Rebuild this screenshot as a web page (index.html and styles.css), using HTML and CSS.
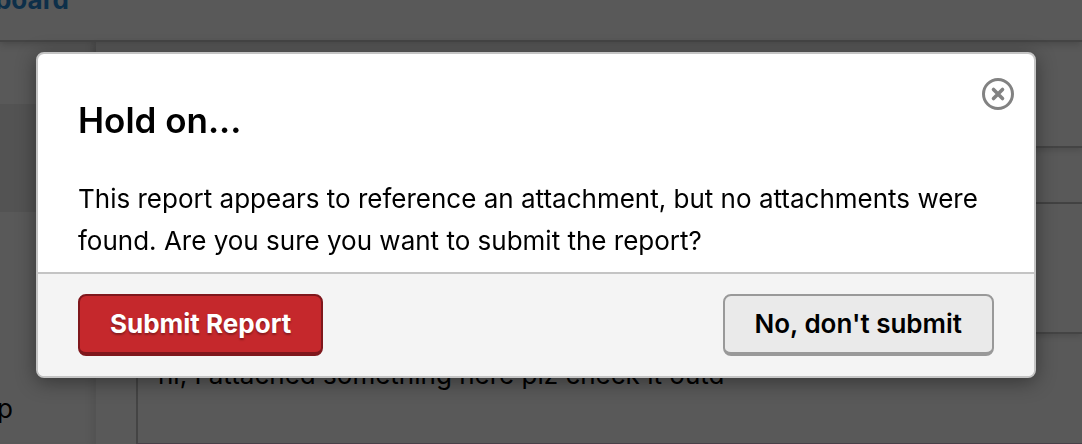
FILE: index.html
```html
<!DOCTYPE html>
<html lang="en">
<head>
<meta charset="utf-8">
<title>Submit Report</title>
<link rel="stylesheet" href="styles.css">
</head>
<body>
<div class="page">
  <header class="topbar"><a class="topbar-link" href="#">board</a></header>
  <div class="columns">
    <nav class="sidebar">
      <div class="sidebar-current"></div>
      <div class="sidebar-item">p</div>
    </nav>
    <main class="content">
      <div class="strip strip-tall"></div>
      <div class="strip strip-short"></div>
      <div class="strip strip-form"></div>
      <div class="editor"><p class="editor-text">hi, I attached something here plz check it outd</p></div>
    </main>
  </div>
</div>
<div class="overlay">
  <section class="dialog" role="dialog" aria-modal="true" aria-labelledby="dialog-title">
    <div class="dialog-body">
      <h1 class="dialog-title" id="dialog-title">Hold on...</h1>
      <p class="dialog-text">This report appears to reference an attachment, but no attachments were found. Are you sure you want to submit the report?</p>
      <button class="close" type="button" aria-label="Close">
        <svg class="close-icon" viewBox="0 0 32 32" fill="none" stroke="currentColor" aria-hidden="true">
          <circle cx="16" cy="16" r="14.5" stroke-width="3"/>
          <path d="M11.5 11.5l9 9M20.5 11.5l-9 9" stroke-width="3.6" stroke-linecap="round"/>
        </svg>
      </button>
    </div>
    <footer class="dialog-footer">
      <button class="button button-danger" type="button">Submit Report</button>
      <button class="button" type="button">No, don't submit</button>
    </footer>
  </section>
</div>
</body>
</html>
```
FILE: styles.css
```css
* { box-sizing: border-box; }

body {
  margin: 0;
  height: 100vh;
  overflow: hidden;
  background: #595959;
  color: #000;
  font-family: Inter, "Liberation Sans", sans-serif;
  font-size: 26px;
  line-height: 42px;
}

.page {
  display: flex;
  flex-direction: column;
  height: 100vh;
  overflow: hidden;
}

.topbar {
  display: flex;
  flex-shrink: 0;
  height: 42px;
  border-bottom: 2px solid #444;
  box-shadow: 0 2px 8px rgba(0, 0, 0, 0.2);
  z-index: 1;
}

.topbar-link {
  display: flex;
  justify-content: flex-end;
  width: 69px;
  line-height: 0;
  color: #0d2f49;
  font-weight: 700;
  text-decoration: none;
}

.columns { display: flex; flex: 1; }

.sidebar {
  width: 96px;
  padding-top: 62px;
  border-right: 1px solid #535353;
  box-shadow: inset -8px 0 8px -6px rgba(0, 0, 0, 0.1);
}

.sidebar-current { height: 108px; background: #535353; }

.sidebar-item {
  display: flex;
  justify-content: flex-end;
  width: 13px;
  padding-top: 176px;
}

.content { flex: 1; }

.strip { border-bottom: 2px solid #444; }
.strip-tall { height: 106px; box-shadow: 0 2px 6px rgba(0, 0, 0, 0.15); }
.strip-short { height: 56px; }
.strip-form { height: 130px; box-shadow: 0 2px 6px rgba(0, 0, 0, 0.15); }

.editor {
  height: 110px;
  margin-left: 40px;
  padding: 20px;
  border-left: 2px solid #444;
  border-bottom: 1px solid #484048;
}

.editor-text { margin: 0; }

.overlay {
  position: fixed;
  inset: 0;
  z-index: 2;
  padding: 52px 46px 0 36px;
}

.dialog {
  overflow: hidden;
  border: 2px solid #c4c4c4;
  border-radius: 8px;
  background: #fff;
  box-shadow: 0 4px 20px rgba(0, 0, 0, 0.4);
}

.dialog-body {
  position: relative;
  padding: 45px 40px 10px;
}

.dialog-title {
  margin: 0 0 37px;
  font-size: 35px;
  font-weight: 600;
  line-height: 42px;
}

.dialog-text { margin: 0; }

.close {
  position: absolute;
  top: 24px;
  right: 20px;
  padding: 0;
  border: 0;
  background: none;
  color: #828282;
  line-height: 0;
}

.close-icon { width: 32px; height: 32px; }

.dialog-footer {
  display: flex;
  justify-content: space-between;
  padding: 20px 40px;
  border-top: 2px solid #c4c4c4;
  background: #f4f4f4;
}

.button {
  padding: 4px 30px;
  border: 2px solid #999;
  border-bottom-width: 4px;
  border-radius: 8px;
  background: #eaeaea;
  color: #000;
  font: 600 26px/48px Inter, "Liberation Sans", sans-serif;
}

.button-danger {
  border-color: #7f171c;
  background: #c5282c;
  color: #fff;
  font-weight: 700;
  text-shadow: 0 2px 2px rgba(0, 0, 0, 0.3);
}
```
